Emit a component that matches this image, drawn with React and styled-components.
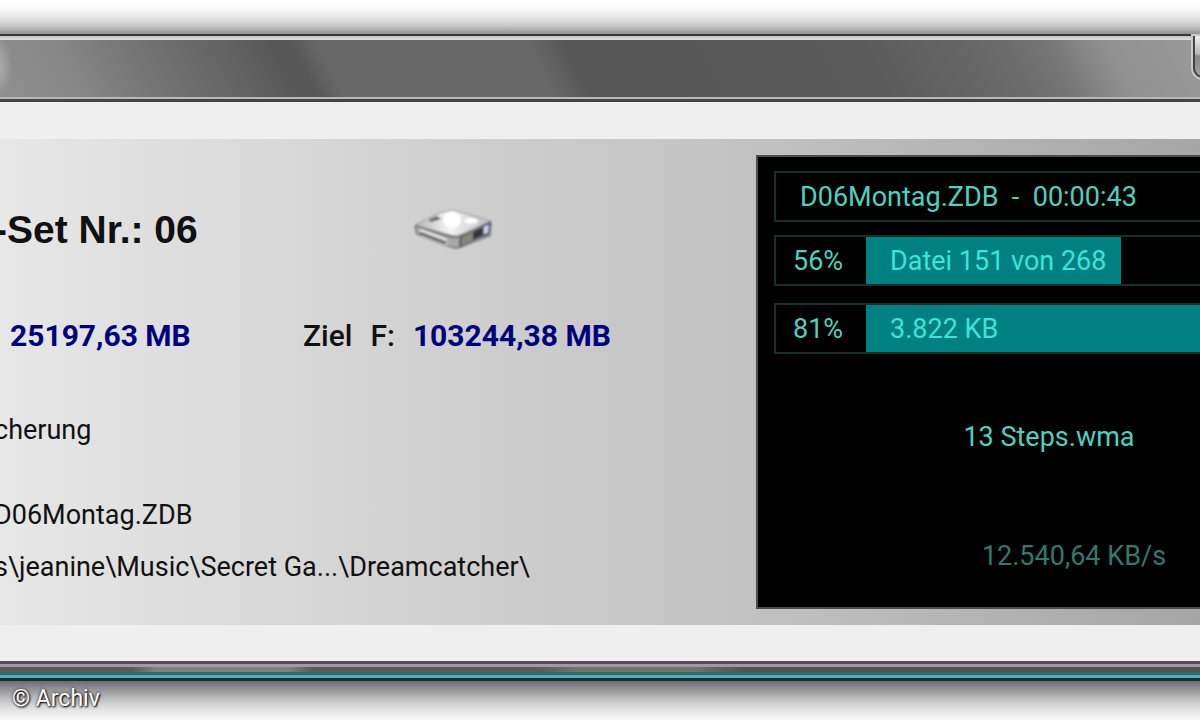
import React from "react";
import styled, {createGlobalStyle} from "styled-components";

const GlobalStyle = createGlobalStyle`
  body {
    margin: 0;
    background: #f8f8f8;
    font-family: Roboto, "Liberation Sans", sans-serif;
    overflow: hidden;
  }
`

const Desktop = styled.div`
  display: flex;
  flex-direction: column;
  min-height: 100vh;
  overflow: hidden;
`

const TopShadow = styled.div`
  height: 34px;
  background: linear-gradient(#ffffff 0%, #fafafa 25%, #e8e8e8 50%, #c8c8c8 76%, #929292 100%);
`

const TitleBar = styled.header`
  display: flex;
  justify-content: flex-end;
  height: 61px;
  border-top: 2px solid #383838;
  background:
    linear-gradient(#c4c4c4, #e0e0e0) top / 100% 4px no-repeat,
    radial-gradient(ellipse 12px 30px at 0 50%, #acacac, transparent),
    linear-gradient(63deg, #8f8f8f 0%, #868686 7%, #747474 13%, #666666 19%, #585858 24%,
      #585858 26%, #686868 28%, #686868 45%, #575757 48%, #5a5a5a 72%, #6c6c6c 84%,
      #757575 87%, #919191 92%, #999999 100%);
`

const CaptionButton = styled.button`
  width: 40px;
  height: 42px;
  margin-right: -33px;
  padding: 0;
  border: 2px solid #444;
  border-top: 0;
  border-radius: 0 0 10px 10px;
  background: linear-gradient(#eeeeee, #b8b8b8 45%, #888 50%, #a0a0a0);
  box-shadow: 0 0 0 2px #c8c8c8;
`

const FrameLine = styled.div`
  height: 5px;
  background: linear-gradient(#b8b8b8 0 2px, #444444 2px 5px);
`

const Client = styled.main`
  padding: 37px 0 36px;
  background: #efefef;
`

const Panel = styled.div`
  display: flex;
  background: linear-gradient(90deg, #e7e7e7 0%, #d4d4d4 30%, #c0c0c0 65%, #a6a6a6 100%);
`

const Info = styled.section`
  flex: 1;
  min-width: 0;
  margin-left: -6px;
  padding-top: 69px;
  color: #111;
  font-size: 27px;
  line-height: 32px;
  white-space: pre;
`

const SetRow = styled.div`
  display: flex;
  align-items: center;
  height: 44px;
  margin-bottom: 68px;
`

const SetTitle = styled.h1`
  flex: 0 0 419px;
  margin: 0;
  font: bold 39px/44px "Liberation Sans", sans-serif;
`

const SpaceRow = styled.div`
  display: flex;
  margin-bottom: 62px;
  font-size: 30px;
  font-weight: 700;
`

const Source = styled.div`
  flex: 0 0 293px;
  padding-left: 16px;
`

const Target = styled.div`
  display: flex;
  gap: 18px;
`

const Label = styled.span`
  font-weight: 500;
`

const Amount = styled.span`
  color: #00007c;
`

const Line = styled.p`
  margin: 0 0 ${props => props.$gap}px;
`

const Console = styled.section`
  flex: 0 0 37%;
  box-sizing: border-box;
  height: 454px;
  margin: 16px 0;
  padding: 14px 0 0 16px;
  overflow: hidden;
  border: 2px solid #4c4c4c;
  border-right: 0;
  background: #000;
  color: #4fd0c0;
  font-size: 27px;
  line-height: 32px;
  white-space: pre;
`

const Box = styled.div`
  display: flex;
  align-items: center;
  box-sizing: border-box;
  width: 550px;
  height: 51px;
  border: 2px solid #16302e;
  margin-bottom: ${props => props.$gap}px;
`

const Job = styled.span`
  padding-left: 24px;
`

const Percent = styled.span`
  flex: 0 0 90px;
  box-sizing: border-box;
  padding-left: 17px;
`

const Track = styled.div`
  flex: 1;
  height: 100%;
`

const Fill = styled.div`
  display: flex;
  align-items: center;
  box-sizing: border-box;
  height: 100%;
  padding-left: 24px;
  background: #008080;
  color: #3ce4da;
`

const Status = styled.p`
  width: 550px;
  margin: 67px 0 87px;
  box-sizing: border-box;
  text-align: center;
`

const Speed = styled(Status)`
  margin: 0;
  padding-left: 50px;
  color: #2f7a6e;
`

const BottomFrame = styled.div`
  height: 20px;
  background:
    linear-gradient(#5a4a56 0 3px, #a597a4 3px 6px, transparent 6px 11px,
      #2c6e70 11px 14px, #62a8b8 14px 17px, #123036 17px 20px),
    linear-gradient(90deg, #585c58 0 11%, #7a847e 13% 24%, #585c58 26% 45%, #6c746e 48% 58%, #4e5450 62%);
`

const BottomShadow = styled.footer`
  flex: 1;
  min-height: 39px;
  background: linear-gradient(#6c6c6c 0%, #88888e 15%, #b0b0b0 38%, #d2d4d4 60%, #eeeeee 85%, #f8f8f8 100%);
`

const Credit = styled.div`
  padding: 4px 12px 0;
  color: #fff;
  font-size: 23px;
  line-height: 28px;
  text-shadow: 1px 1px 2px #000, 0 0 3px #222;
`

const DriveIcon = () => (
    <svg width="82" height="44" viewBox="0 0 82 44" aria-hidden="true">
        <defs>
            <linearGradient id="driveTop" x1="0" y1="0" x2="1" y2="0">
                <stop offset="0" stopColor="#b4b4b4"/>
                <stop offset="0.45" stopColor="#f4f4f4"/>
                <stop offset="1" stopColor="#bcbcc2"/>
            </linearGradient>
            <linearGradient id="driveSide" x1="0" y1="0" x2="1" y2="0">
                <stop offset="0" stopColor="#666"/>
                <stop offset="1" stopColor="#9a9aa8"/>
            </linearGradient>
            <filter id="soft"><feGaussianBlur stdDeviation="1"/></filter>
        </defs>
        <g filter="url(#soft)">
            <path d="M2 18 L30 4 L78 14 L78 28 L43 41 L3 26Z" fill="#707070"/>
            <path d="M2 17 L26 5 L40 2 L78 13 L47 27 Q42 29 37 27Z" fill="url(#driveTop)" stroke="#999" strokeWidth="1"/>
            <path d="M2 18 L37 29 Q43 31 47 28 L46 39 Q42 41 37 39 L4 26Z" fill="#a8a8a8" stroke="#666" strokeWidth="1"/>
            <path d="M7 22 L34 32 M8 26 L34 36" stroke="#eee" strokeWidth="2" fill="none"/>
            <path d="M7 25 L33 35" stroke="#444" strokeWidth="2" fill="none"/>
            <path d="M47 28 L79 14 L78 27 L47 40Z" fill="url(#driveSide)"/>
            <path d="M49 30 L59 25 L59 33 L49 37Z" fill="#888878"/>
            <path d="M60 24 L69 19 L69 28 L60 32Z" fill="#303038"/>
            <path d="M70 18 L77 15 L76 25 L70 28Z" fill="#d5d5e2" stroke="#55557a" strokeWidth="2"/>
            <path d="M15 12 L24 8 L28 11 L18 14Z" fill="#666"/>
            <ellipse cx="39" cy="12" rx="9" ry="8" fill="#fff"/>
            <ellipse cx="58" cy="13" rx="7" ry="3" fill="#fff"/>
        </g>
    </svg>
)

const bars = [
    {percent: 56, text: "Datei 151 von 268", gap: 17},
    {percent: 81, text: "3.822 KB", gap: 0},
]

const App = () => {
    return (
        <>
            <GlobalStyle/>
            <Desktop>
                <TopShadow/>
                <TitleBar>
                    <CaptionButton type="button"/>
                </TitleBar>
                <FrameLine/>
                <Client>
                    <Panel>
                        <Info>
                            <SetRow>
                                <SetTitle>-Set Nr.: 06</SetTitle>
                                <DriveIcon/>
                            </SetRow>
                            <SpaceRow>
                                <Source><Amount>25197,63 MB</Amount></Source>
                                <Target>
                                    <Label>Ziel</Label>
                                    <Label>F:</Label>
                                    <Amount>103244,38 MB</Amount>
                                </Target>
                            </SpaceRow>
                            <Line $gap={53}>cherung</Line>
                            <Line $gap={20}>D06Montag.ZDB</Line>
                            <Line $gap={0}>s\jeanine\Music\Secret Ga...\Dreamcatcher\</Line>
                        </Info>
                        <Console>
                            <Box $gap={13}><Job>D06Montag.ZDB  -  00:00:43</Job></Box>
                            {bars.map(bar => (
                                <Box key={bar.text} $gap={bar.gap}>
                                    <Percent>{bar.percent}%</Percent>
                                    <Track role="progressbar" aria-label={bar.text} aria-valuenow={bar.percent}>
                                        <Fill style={{width: bar.percent + "%"}}>{bar.text}</Fill>
                                    </Track>
                                </Box>
                            ))}
                            <Status>13 Steps.wma</Status>
                            <Speed>12.540,64 KB/s</Speed>
                        </Console>
                    </Panel>
                </Client>
                <BottomFrame/>
                <BottomShadow>
                    <Credit>© Archiv</Credit>
                </BottomShadow>
            </Desktop>
        </>
    );
};

export default App;
